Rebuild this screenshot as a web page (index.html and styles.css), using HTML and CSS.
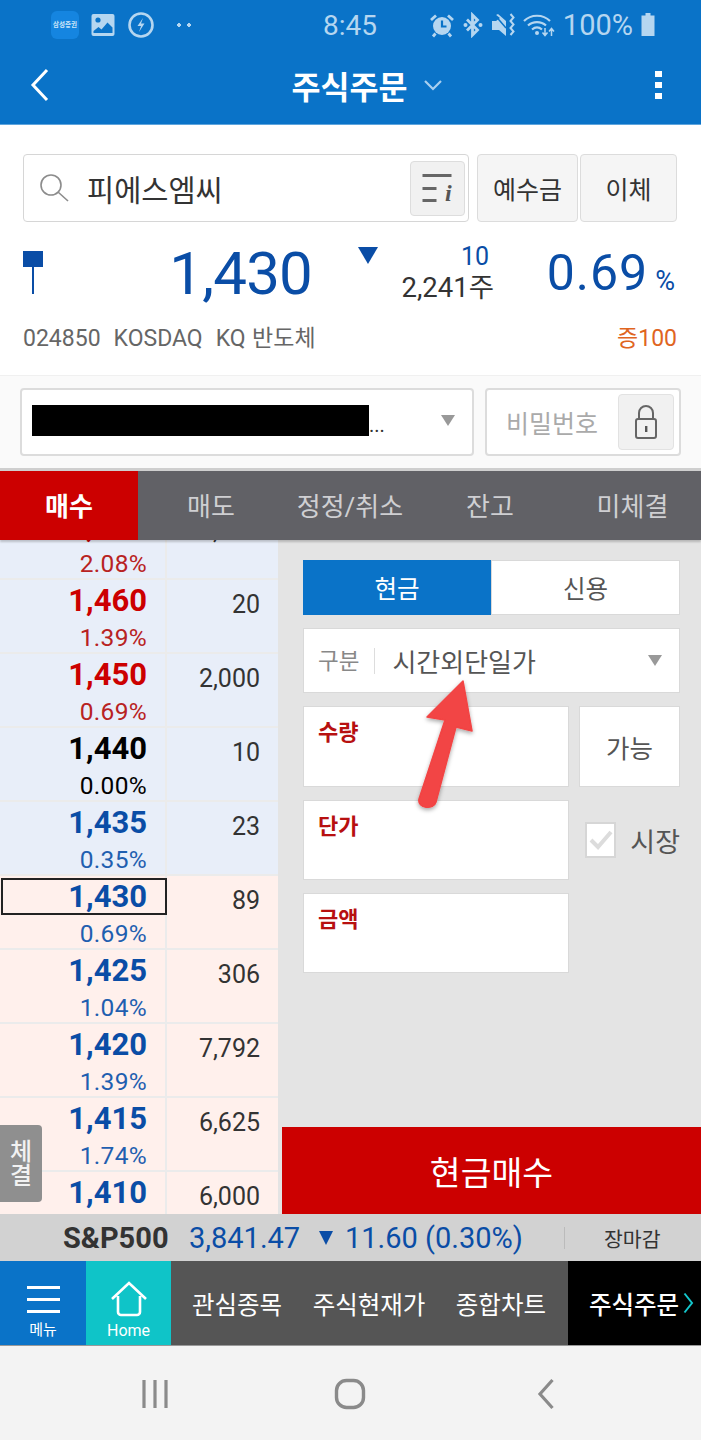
FILE: index.html
```html
<!DOCTYPE html>
<html lang="ko">
<head>
    <meta charset="UTF-8">
    <meta name="viewport" content="width=device-width, initial-scale=1.0">
    <title>주식주문</title>
    <link rel="stylesheet" href="styles.css">
</head>
<body>
    <div class="screen">
        <header class="top">
            <div class="status-bar">
                <div class="status-left">
                    <span class="app-badge">삼성증권</span>
                    <svg width="24" height="24" viewBox="0 0 24 24"><rect x="0.500" y="1" width="23" height="22" rx="2" fill="#b5d6f0"/><circle cx="7" cy="7" r="2.600" fill="#0a73c8"/><path d="M2.500 18l5-4 3 2.500 6-7 5 5V21h-19z" fill="#0a73c8"/><path d="M2 20h20v1.500H2z" fill="#b5d6f0"/></svg>
                    <svg width="28" height="28" viewBox="0 0 28 28"><circle cx="14" cy="14" r="11.500" fill="none" stroke="#b5d6f0" stroke-width="2.600"/><path d="M16 7l-5.500 8h3.500l-2 6 5.500-8.500h-3.500z" fill="#b5d6f0"/></svg>
                    <span class="status-dots"></span>
                </div>
                <span class="status-time">8:45</span>
                <div class="status-right">
                    <svg width="26" height="26" viewBox="0 0 26 26"><circle cx="13" cy="14" r="9" fill="#b5d6f0"/><path d="M13 8.500v6h4.500" fill="none" stroke="#0a73c8" stroke-width="2.200"/><path d="M2 8l5-4.500M24 8l-5-4.500M6.500 21.500l-2.500 3M19.500 21.500l2.500 3" stroke="#b5d6f0" stroke-width="2.800"/></svg>
                    <svg width="20" height="26" viewBox="0 0 20 26"><path d="M4 7.500l10.500 10.500L9.500 23V3l5 5L4 18.500" fill="none" stroke="#b5d6f0" stroke-width="2.800"/><circle cx="2.500" cy="13" r="2" fill="#b5d6f0"/><circle cx="17.500" cy="13" r="2" fill="#b5d6f0"/></svg>
                    <svg width="24" height="26" viewBox="0 0 24 26"><path d="M1 9h4l4-3-4-3 2-1 8 7v15l-7-6H1z" fill="#b5d6f0"/><path d="M3 2l12 14" stroke="#0a73c8" stroke-width="1.500"/><path d="M19.500 2l3 3.500-3 3.500 3 3.500-3 3.500 3 3.500-3 3.500" fill="none" stroke="#b5d6f0" stroke-width="2"/></svg>
                    <svg width="32" height="26" viewBox="0 0 32 26"><path d="M1 9c7-7 19-7 26 0M5 13.500c5-4.500 13-4.500 18 0M9 17.500c3-2.500 7-2.500 10 0" fill="none" stroke="#b5d6f0" stroke-width="2.200"/><circle cx="14" cy="21" r="2" fill="#b5d6f0"/><path d="M22 16v7M19.500 20.500l2.500 3 2.500-3M28.500 24v-7M26 19.500l2.500-3 2.500 3" fill="none" stroke="#b5d6f0" stroke-width="1.500"/></svg>
                    <span class="status-pct">100%</span>
                    <svg width="14" height="26" viewBox="0 0 14 26"><path d="M4.500 1h5v2.500H13.500V24H0.500V3.500h4z" fill="#b5d6f0"/></svg>
                </div>
            </div>
            <div class="title-bar">
                <svg class="back-icon" width="24" height="34" viewBox="0 0 24 34"><path d="M19 2L5 17l14 15" fill="none" stroke="#fff" stroke-width="3"/></svg>
                <div class="title">주식주문
                    <svg width="20" height="12" viewBox="0 0 20 12"><path d="M2 2l8 8 8-8" fill="none" stroke="#a8cff0" stroke-width="2.200"/></svg>
                </div>
                <div class="more-icon"><i></i><i></i><i></i></div>
            </div>
        </header>

        <section class="stock">
            <div class="search-row">
                <div class="search-box">
                    <svg width="32" height="32" viewBox="0 0 32 32"><circle cx="13" cy="13" r="10" fill="none" stroke="#8c8c8c" stroke-width="1.600"/><path d="M20 20l10 9" stroke="#8c8c8c" stroke-width="1.600"/></svg>
                    <span class="search-name">피에스엠씨</span>
                    <div class="info-btn">
                        <svg width="34" height="30" viewBox="0 0 34 30"><path d="M1.500 2.500h29M1.500 15.500h14M1.500 27.500h14" stroke="#666" stroke-width="2.800"/><text x="24" y="28" class="info-i">i</text></svg>
                    </div>
                </div>
                <button class="plain-btn deposit-btn" type="button">예수금</button>
                <button class="plain-btn transfer-btn" type="button">이체</button>
            </div>
            <div class="price-row">
                <div class="candle"><span class="candle-body"></span><span class="candle-wick"></span></div>
                <div class="price-now">1,430</div>
                <span class="tri-down"></span>
                <div class="price-diff">
                    <span class="diff-value">10</span>
                    <span class="diff-volume">2,241주</span>
                </div>
                <div class="price-rate">0.69<small>%</small></div>
            </div>
            <div class="code-row">
                <span class="code-text">024850&nbsp; KOSDAQ&nbsp; KQ 반도체</span>
                <span class="margin-text">증100</span>
            </div>
        </section>

        <section class="account">
            <div class="account-select">
                <span class="redacted"></span>
                <span class="ellipsis">...</span>
                <span class="caret"></span>
            </div>
            <div class="password-box">
                <span class="password-label">비밀번호</span>
                <div class="lock-btn">
                    <svg width="24" height="36" viewBox="0 0 24 36"><rect x="2" y="15" width="20" height="19" rx="2" fill="none" stroke="#666" stroke-width="2"/><path d="M5 15V9a7 7 0 0 1 14 0v6" fill="none" stroke="#666" stroke-width="2"/><rect x="11" y="22" width="2.400" height="6" fill="#555"/></svg>
                </div>
            </div>
        </section>

        <nav class="tabs">
            <span class="tab tab-active">매수</span>
            <span class="tab">매도</span>
            <span class="tab">정정/취소</span>
            <span class="tab">잔고</span>
            <span class="tab">미체결</span>
        </nav>

        <main class="order">
            <div class="book">
                <div class="book-row row-ask first-row"><div class="cell-price up"><b>1,470</b><span>2.08%</span></div><div class="cell-qty">1,000</div></div>
                <div class="book-row row-ask"><div class="cell-price up"><b>1,460</b><span>1.39%</span></div><div class="cell-qty">20</div></div>
                <div class="book-row row-ask"><div class="cell-price up"><b>1,450</b><span>0.69%</span></div><div class="cell-qty">2,000</div></div>
                <div class="book-row row-ask"><div class="cell-price flat"><b>1,440</b><span>0.00%</span></div><div class="cell-qty">10</div></div>
                <div class="book-row row-ask"><div class="cell-price down"><b>1,435</b><span>0.35%</span></div><div class="cell-qty">23</div></div>
                <div class="book-row row-bid"><div class="cell-price down current"><b>1,430</b><span>0.69%</span></div><div class="cell-qty">89</div></div>
                <div class="book-row row-bid"><div class="cell-price down"><b>1,425</b><span>1.04%</span></div><div class="cell-qty">306</div></div>
                <div class="book-row row-bid"><div class="cell-price down"><b>1,420</b><span>1.39%</span></div><div class="cell-qty">7,792</div></div>
                <div class="book-row row-bid"><div class="cell-price down"><b>1,415</b><span>1.74%</span></div><div class="cell-qty">6,625</div></div>
                <div class="book-row row-bid"><div class="cell-price down"><b>1,410</b></div><div class="cell-qty">6,000</div></div>
            </div>
            <div class="side">
                <div class="form">
                    <div class="segment">
                        <span class="segment-item segment-on">현금</span>
                        <span class="segment-item">신용</span>
                    </div>
                    <div class="gubun">
                        <span class="gubun-label">구분</span>
                        <span class="gubun-value">시간외단일가</span>
                        <span class="caret"></span>
                    </div>
                    <div class="field">수량</div>
                    <div class="can-btn">가능</div>
                    <div class="field">단가</div>
                    <label class="market">
                        <span class="checkbox"><svg width="26" height="22" viewBox="0 0 26 22"><path d="M3 11l7 7L23 3" fill="none" stroke="#dcdcdc" stroke-width="4"/></svg></span>
                        시장
                    </label>
                    <div class="field">금액</div>
                </div>
                <button class="buy-btn" type="button">현금매수</button>
            </div>
            <div class="trade-tag">체<br>결</div>
            <svg class="arrow" width="70" height="144" viewBox="0 0 70 144">
                <defs><filter id="arrowShadow" x="-30%" y="-10%" width="160%" height="125%"><feDropShadow dx="0" dy="2" stdDeviation="2" flood-color="#000" flood-opacity="0.350"/></filter></defs>
                <path d="M49 5L58 55 42 51 22 126C20 134 3 133 5 123L31 44 13 41z" fill="#f24444" stroke="#f24444" stroke-width="1.500" stroke-linejoin="round" filter="url(#arrowShadow)"/>
            </svg>
        </main>

        <div class="ticker">
            <b class="ticker-name">S&amp;P500</b>
            <span class="ticker-value">3,841.47</span>
            <span class="ticker-tri"></span>
            <span class="ticker-change">11.60 (0.30%)</span>
            <span class="ticker-line"></span>
            <span class="ticker-state">장마감</span>
        </div>

        <nav class="bottom-nav">
            <div class="nav-menu">
                <span class="burger"><i></i><i></i><i></i></span>
                <span>메뉴</span>
            </div>
            <div class="nav-home">
                <svg width="38" height="36" viewBox="0 0 38 36"><path d="M2 18L19 2l17 16M8 15v16a3 3 0 0 0 3 3h16a3 3 0 0 0 3-3V15" fill="none" stroke="#fff" stroke-width="2.600"/></svg>
                <span>Home</span>
            </div>
            <div class="nav-links">
                <span>관심종목</span>
                <span>주식현재가</span>
                <span>종합차트</span>
            </div>
            <div class="nav-current">
                <span>주식주문</span>
                <svg width="11" height="22" viewBox="0 0 11 22"><path d="M1.500 1.500L9 11 1.500 20.500" fill="none" stroke="#14c7cc" stroke-width="2"/></svg>
            </div>
        </nav>

        <footer class="system-bar">
            <svg width="28" height="30" viewBox="0 0 28 30"><path d="M3 1v28M14 1v28M25 1v28" stroke="#8a8a8a" stroke-width="3.200"/></svg>
            <svg class="system-home" width="32" height="32" viewBox="0 0 32 32"><rect x="2.500" y="2.500" width="27" height="27" rx="10" fill="none" stroke="#8a8a8a" stroke-width="3.400"/></svg>
            <svg width="18" height="32" viewBox="0 0 18 32"><path d="M15.500 2L3 16l12.500 14" fill="none" stroke="#8a8a8a" stroke-width="3.200"/></svg>
        </footer>
    </div>
</body>
</html>
```

FILE: styles.css
```css
* {
    box-sizing: border-box;
}
body {
    margin: 0;
    background: #fff;
    font-family: 'Roboto', 'Noto Sans CJK KR', sans-serif;
}
.screen {
    position: relative;
    width: 701px;
    height: 1440px;
    overflow: hidden;
    display: flex;
    flex-direction: column;
}

/* 상단 */
.top {
    height: 125px;
    background: #0a73c8;
    border-bottom: 1px solid #5fa5dd;
}
.status-bar {
    height: 50px;
    padding: 0 46px 0 51px;
    display: flex;
    align-items: center;
    color: #b5d6f0;
}
.status-left {
    width: 272px;
    display: flex;
    align-items: center;
    gap: 12px;
}
.app-badge {
    width: 28px;
    height: 28px;
    border-radius: 6px;
    background: #1585e0;
    color: #cfe6f8;
    font-size: 6.500px;
    font-weight: 700;
    line-height: 28px;
    text-align: center;
    white-space: nowrap;
    overflow: hidden;
}
.status-dots {
    width: 14px;
    height: 4px;
    margin-left: 10px;
    background: radial-gradient(circle at 2px 2px, #b5d6f0 1.600px, transparent 2px), radial-gradient(circle at 12px 2px, #b5d6f0 1.600px, transparent 2px);
}
.status-time {
    font-size: 28px;
}
.status-right {
    margin-left: auto;
    display: flex;
    align-items: center;
    gap: 8px;
}
.status-pct {
    font-size: 29px;
}
.title-bar {
    height: 74px;
    padding: 0 39px 4px 28px;
    display: flex;
    align-items: center;
    justify-content: space-between;
}
.title {
    margin-left: 28px;
    color: #fff;
    font-size: 31.500px;
    font-weight: 700;
    display: flex;
    align-items: center;
    gap: 16px;
}
.more-icon {
    display: flex;
    flex-direction: column;
    gap: 5px;
}
.more-icon i {
    display: block;
    width: 7px;
    height: 6px;
    background: #fff;
}

/* 종목 */
.stock {
    height: 250px;
    padding: 29px 24px 0 23px;
}
.search-row {
    display: flex;
    height: 68px;
}
.search-box {
    width: 446px;
    margin-right: 8px;
    padding: 0 3px 0 14px;
    border: 1px solid #d6d6d6;
    border-radius: 4px;
    display: flex;
    align-items: center;
}
.search-name {
    flex: 1;
    margin-left: 17px;
    font-size: 29.500px;
    color: #333;
}
.info-btn {
    width: 55px;
    height: 55px;
    background: #f1f1f1;
    border: 1px solid #ddd;
    border-radius: 4px;
    display: flex;
    align-items: center;
    justify-content: center;
}
.info-i {
    font-family: 'Liberation Serif', serif;
    font-style: italic;
    font-weight: 700;
    font-size: 24px;
    fill: #555;
}
.plain-btn {
    height: 68px;
    padding: 0;
    background: #f5f5f5;
    border: 1px solid #dcdcdc;
    border-radius: 4px;
    color: #333;
    font-family: inherit;
    font-size: 25px;
}
.deposit-btn {
    width: 101px;
    margin-right: 2px;
}
.transfer-btn {
    width: 97px;
}
.price-row {
    height: 88px;
    display: flex;
}
.candle {
    width: 20px;
    padding-top: 29px;
    display: flex;
    flex-direction: column;
    align-items: center;
}
.candle-body {
    width: 20px;
    height: 16px;
    background: #0a4da6;
}
.candle-wick {
    width: 2px;
    height: 27px;
    background: #0a4da6;
}
.price-now {
    width: 269px;
    padding-top: 8px;
    text-align: right;
    color: #0a4da6;
    font-size: 60px;
    line-height: 88px;
    letter-spacing: -0.800px;
}
.tri-down {
    width: 0;
    height: 0;
    margin: 25px 0 0 46px;
    border-left: 10px solid transparent;
    border-right: 10px solid transparent;
    border-top: 17px solid #0a4da6;
}
.price-diff {
    width: 116px;
    padding-top: 20px;
    display: flex;
    flex-direction: column;
    align-items: flex-end;
    line-height: 30px;
}
.diff-value {
    margin-right: 5px;
    color: #0a4da6;
    font-size: 25px;
}
.diff-volume {
    margin-top: 1px;
    color: #333;
    font-size: 27.500px;
}
.price-rate {
    flex: 1;
    padding: 7px 2px 0 0;
    text-align: right;
    color: #0a4da6;
    font-size: 50px;
    line-height: 88px;
    letter-spacing: 1px;
    white-space: nowrap;
}
.price-rate small {
    margin-left: 7px;
    font-size: 27px;
    letter-spacing: 0;
}
.code-row {
    margin-top: 13px;
    display: flex;
    justify-content: space-between;
    font-size: 23px;
    line-height: 32px;
}
.code-text {
    color: #666;
    word-spacing: 0.800px;
}
.margin-text {
    color: #e0651f;
}

/* 계좌 */
.account {
    height: 96px;
    padding: 12px 20px 0;
    background: #fafafa;
    border-top: 1px solid #f0f0f0;
    border-bottom: 3px solid #cfcfcf;
    display: flex;
    gap: 11px;
}
.account-select {
    width: 454px;
    height: 68px;
    padding: 0 17px 0 10px;
    background: #fff;
    border: 2px solid #dcdcdc;
    border-radius: 4px;
    display: flex;
    align-items: center;
}
.redacted {
    width: 337px;
    height: 31px;
    margin-bottom: 3px;
    background: #000;
}
.ellipsis {
    flex: 1;
    padding-top: 6px;
    color: #333;
    font-size: 20px;
}
.caret {
    width: 0;
    height: 0;
    border-left: 7px solid transparent;
    border-right: 7px solid transparent;
    border-top: 11px solid #999;
}
.account-select .caret {
    margin-bottom: 3px;
}
.password-box {
    width: 196px;
    height: 68px;
    padding: 0 5px 0 19px;
    background: #fff;
    border: 2px solid #dcdcdc;
    border-radius: 4px;
    display: flex;
    align-items: center;
    justify-content: space-between;
}
.password-label {
    color: #aaa;
    font-size: 25px;
    white-space: nowrap;
}
.lock-btn {
    width: 56px;
    height: 56px;
    background: #f1f1f1;
    border: 1px solid #e2e2e2;
    border-radius: 4px;
    display: flex;
    align-items: center;
    justify-content: center;
}
.tabs {
    height: 69px;
    background: #616166;
    display: grid;
    grid-template-columns: 138px 146px 132px 148px 137px;
    box-shadow: 0 2px 2px rgba(0, 0, 0, 0.2);
    z-index: 1;
}
.tab {
    padding-bottom: 2px;
    display: flex;
    align-items: center;
    justify-content: center;
    color: #cfcfd2;
    font-size: 26px;
}
.tab-active {
    background: #cc0000;
    color: #fff;
    font-weight: 700;
}

/* 호가 + 주문 */
.order {
    position: relative;
    height: 674px;
    display: flex;
    overflow: hidden;
}
.book {
    width: 278px;
    height: 674px;
    overflow: hidden;
}
.book-row {
    height: 74px;
    display: flex;
    border-bottom: 2px solid #ebebeb;
}
.first-row {
    margin-top: -34px;
}
.row-ask {
    background: #e8eef9;
}
.row-bid {
    background: #fff0ec;
}
.cell-price {
    width: 167px;
    padding-top: 2px;
    border-right: 2px solid #ebebeb;
    display: flex;
    flex-direction: column;
    text-align: right;
}
.cell-price b {
    padding: 1px 18px 0 0;
    font-size: 31px;
    line-height: 36px;
}
.cell-price span {
    margin-top: 4px;
    padding-right: 18px;
    font-size: 24.500px;
    line-height: 30px;
    letter-spacing: 0.300px;
}
.up {
    color: #cc0000;
}
.up span {
    color: #b82222;
}
.flat {
    color: #000;
}
.down {
    color: #0a4da6;
}
.down span {
    color: #1f5fb0;
}
.current b {
    margin: 0 -2px 0 1px;
    padding-right: 20px;
    outline: 2px solid #222;
    outline-offset: -2px;
}
.cell-qty {
    flex: 1;
    padding: 7px 18px 0 0;
    text-align: right;
    color: #333;
    font-size: 25px;
    line-height: 36px;
}
.side {
    flex: 1;
    background: #e4e4e4;
    display: flex;
    flex-direction: column;
    justify-content: space-between;
}
.form {
    padding: 20px 21px 0 25px;
    display: grid;
    grid-template-columns: 266px 101px;
    column-gap: 10px;
    row-gap: 13px;
    grid-template-rows: 55px 65px 81px 80px 80px;
}
.form > div,
.segment-item {
    box-shadow: inset 0 0 0 1px #d9d9d9;
}
.segment {
    grid-column: 1 / 3;
    display: grid;
    grid-template-columns: 188px 1fr;
}
.segment-item {
    display: flex;
    align-items: center;
    justify-content: center;
    background: #fff;
    color: #555;
    font-size: 24.500px;
}
.segment-on {
    background: #0a73c8;
    box-shadow: none;
    color: #fff;
}
.gubun {
    grid-column: 1 / 3;
    padding: 0 18px 0 15px;
    background: #fff;
    display: flex;
    align-items: center;
}
.gubun-label {
    padding-right: 15px;
    border-right: 1px solid #ddd;
    color: #888;
    font-size: 22.500px;
    line-height: 26px;
}
.gubun-value {
    flex: 1;
    margin-left: 17px;
    color: #555;
    font-size: 26px;
}
.field {
    padding: 11px 15px 0;
    background: #fff;
    color: #b71010;
    font-size: 22px;
    font-weight: 700;
    line-height: 32px;
}
.can-btn {
    background: #fff;
    display: flex;
    align-items: center;
    justify-content: center;
    color: #555;
    font-size: 25.500px;
}
.market {
    padding-left: 6px;
    display: flex;
    align-items: center;
    gap: 14px;
    color: #555;
    font-size: 27px;
    white-space: nowrap;
}
.checkbox {
    width: 36px;
    height: 36px;
    background: #fff;
    border: 2px solid #d6d6d6;
    display: flex;
    align-items: center;
    justify-content: center;
}
.buy-btn {
    height: 87px;
    margin-left: 4px;
    padding: 0;
    background: #cc0000;
    border: 0;
    color: #fff;
    font-family: inherit;
    font-size: 33.500px;
}
.trade-tag {
    position: absolute;
    left: 0;
    top: 585px;
    width: 42px;
    height: 77px;
    padding-top: 15px;
    background: #8f8f8f;
    border-radius: 0 4px 4px 0;
    color: #f2f2f2;
    font-size: 24px;
    font-weight: 500;
    line-height: 24px;
    text-align: center;
}
.arrow {
    position: absolute;
    left: 414px;
    top: 136px;
}

/* 하단 */
.ticker {
    height: 47px;
    background: #d2d2d2;
    padding-left: 63px;
    display: flex;
    align-items: center;
    font-size: 29px;
    white-space: nowrap;
}
.ticker-name {
    width: 126px;
    color: #333;
}
.ticker-value {
    width: 130px;
    color: #0a4da6;
}
.ticker-tri {
    width: 0;
    height: 0;
    margin-right: 12px;
    border-left: 7px solid transparent;
    border-right: 7px solid transparent;
    border-top: 14px solid #0a4da6;
}
.ticker-change {
    width: 219px;
    color: #0a4da6;
}
.ticker-line {
    width: 1px;
    height: 22px;
    background: #bbb;
}
.ticker-state {
    margin-left: 39px;
    color: #333;
    font-size: 20.500px;
}
.bottom-nav {
    height: 85px;
    display: grid;
    grid-template-columns: 86px 85px 397px 133px;
    border-bottom: 1px solid #999;
    color: #fff;
}
.nav-menu,
.nav-home {
    display: flex;
    flex-direction: column;
    align-items: center;
}
.nav-menu {
    background: #0a73c8;
    padding-top: 25px;
    font-size: 15px;
    line-height: 20px;
}
.burger {
    display: flex;
    flex-direction: column;
    gap: 9px;
    margin-bottom: 7px;
}
.burger i {
    display: block;
    width: 33px;
    height: 3px;
    background: #fff;
}
.nav-home {
    background: #0fc4c8;
    padding-top: 20px;
    font-size: 16px;
    line-height: 22px;
    gap: 3px;
}
.nav-links {
    background: #555;
    padding: 0 22px 0 21px;
    display: flex;
    align-items: center;
    justify-content: space-between;
    font-size: 24.500px;
}
.nav-current {
    background: #000;
    padding: 0 7px 0 21px;
    display: flex;
    align-items: center;
    justify-content: space-between;
    font-size: 24.500px;
    font-weight: 500;
}
.system-bar {
    flex: 1;
    background: #f3f3f3;
    padding: 2px 146px 0 141px;
    display: flex;
    align-items: center;
    justify-content: space-between;
}
.system-home {
    margin-right: 6px;
}
```
